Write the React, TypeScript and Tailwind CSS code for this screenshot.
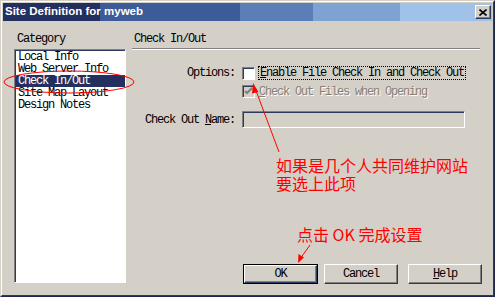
import React from "react";

const mono = "font-['Liberation_Mono',monospace] text-[12px] leading-[12px] tracking-[-1.2px]";

function Btn({ children, isDefault = false }: { children: React.ReactNode; isDefault?: boolean }) {
    const inner = (
        <div className="flex h-full w-full items-center justify-center border border-t-white border-l-white border-r-[#2c3a5e] border-b-[#2c3a5e] bg-[#d4d0c8] shadow-[inset_-1px_-1px_0_#808080] text-black">
            {children}
        </div>
    );
    if (isDefault) {
        return <div className="h-[20px] w-[75px] border border-black">{inner}</div>;
    }
    return <div className="h-[20px] w-[74px]">{inner}</div>;
}

function Checkbox({ checked = false, disabled = false }: { checked?: boolean; disabled?: boolean }) {
    return (
        <div
            className={`flex h-[13px] w-[13px] shrink-0 items-center justify-center border border-t-[#808080] border-l-[#808080] border-r-white border-b-white shadow-[inset_1px_1px_0_#2c3a5e] ${disabled ? "bg-[#d4d0c8]" : "bg-white"}`}
        >
            {checked && (
                <svg width="9" height="9" viewBox="0 0 9 9">
                    <path d="M1 4 L3 6 L8 1" stroke={disabled ? "#808080" : "#000"} strokeWidth="2" fill="none" />
                </svg>
            )}
        </div>
    );
}

export default function App() {
    const categories = ["Local Info", "Web Server Info", "Check In/Out", "Site Map Layout", "Design Notes"];

    return (
        <div className="relative h-[297px] w-[495px] overflow-hidden border border-t-[#d4d0c8] border-l-[#d4d0c8] border-r-[#1e2848] border-b-[#1e2848] bg-[#d4d0c8]">
            <div className="flex h-full w-full flex-col border border-t-white border-l-white border-r-[#2c3a5e] border-b-[#2c3a5e] p-[1px]">
                {/* title bar */}
                <div className="flex h-[18px] shrink-0 items-center bg-[linear-gradient(to_right,#232f5e_0px,#232f5e_97px,#3d5b98_97px,#3d5b98_237px,#5b7eb6_237px,#5b7eb6_310px,#7ea2d1_310px,#7ea2d1_397px,#a0c1e8_397px)]">
                    <span className="pl-[2px] font-['Liberation_Sans',sans-serif] text-[11.5px] font-bold text-white">
                        Site Definition for myweb
                    </span>
                    <div className="ml-auto mr-[1px] flex h-[14px] w-[16px] items-center justify-center border border-t-white border-l-white border-r-[#2c3a5e] border-b-[#2c3a5e] bg-[#d4d0c8] shadow-[inset_-1px_-1px_0_#808080]">
                        <svg width="8" height="7" viewBox="0 0 8 7">
                            <path d="M0.5 0.5 L7.5 6.5 M7.5 0.5 L0.5 6.5" stroke="#000" strokeWidth="1.6" />
                        </svg>
                    </div>
                </div>

                {/* body */}
                <div className={`flex min-h-0 flex-1 ${mono} text-black`}>
                    {/* category column */}
                    <div className="ml-[11px] flex w-[112px] flex-col">
                        <div className="mt-[12px] h-[13px] pl-[3px]">Category</div>
                        <div className="mt-[3px] h-[234px] border border-t-[#808080] border-l-[#808080] border-r-white border-b-white bg-white shadow-[inset_1px_1px_0_#2c3a5e]">
                            <div className="pt-[1px] pl-[1px]">
                                {categories.map((c) => (
                                    <div
                                        key={c}
                                        className={`flex h-[12px] items-center pl-[2px] ${c === "Check In/Out" ? "bg-[#232f5e] text-white" : ""}`}
                                    >
                                        <span className="leading-[11px]">{c}</span>
                                    </div>
                                ))}
                            </div>
                        </div>
                    </div>

                    {/* settings column */}
                    <div className="ml-[6px] flex w-[348px] flex-col">
                        <div className="mt-[12px] h-[13px] pl-[2px]">Check In/Out</div>
                        <div className="mt-[2px] h-[2px] border-t border-b border-t-[#808080] border-b-white" />

                        <div className="mt-[16px] flex h-[14px] items-center">
                            <div className="w-[104px] pr-[1px] text-right">Options:</div>
                            <div className="ml-[6px]">
                                <Checkbox />
                            </div>
                            <div className="ml-[3px] flex h-[14px] items-center border border-dotted border-black px-[1px]">
                                <span>
                                    <span className="underline">E</span>nable File Check In and Check Out
                                </span>
                            </div>
                        </div>

                        <div className="mt-[5px] flex h-[13px] items-center">
                            <div className="ml-[110px]">
                                <Checkbox checked disabled />
                            </div>
                            <div className="ml-[4px] text-[#808080] [text-shadow:1px_1px_0_#fff]">
                                <span className="underline">C</span>heck Out Files when Opening
                            </div>
                        </div>

                        <div className="mt-[13px] flex h-[17px] items-center">
                            <div className="w-[104px] pr-[1px] text-right">
                                Check Out <span className="underline">N</span>ame:
                            </div>
                            <div className="ml-[6px] h-[17px] w-[223px] border border-t-[#808080] border-l-[#808080] border-r-white border-b-white bg-[#d4d0c8] shadow-[inset_1px_1px_0_#2c3a5e]" />
                        </div>

                        <div className="mt-auto mb-[10px] flex items-center">
                            <div className="ml-[111px]">
                                <Btn isDefault>OK</Btn>
                            </div>
                            <div className="ml-[6px]">
                                <Btn>Cancel</Btn>
                            </div>
                            <div className="ml-[10px]">
                                <Btn>
                                    <span>
                                        <span className="underline">H</span>elp
                                    </span>
                                </Btn>
                            </div>
                        </div>
                    </div>
                </div>
            </div>

            {/* red annotations */}
            <svg className="pointer-events-none absolute left-[-1px] top-[-1px]" width="495" height="297" viewBox="0 0 495 297">
                <ellipse cx="69" cy="82" rx="65" ry="11" fill="none" stroke="#ff0000" strokeWidth="1" />
                <line x1="279" y1="152" x2="255" y2="88" stroke="#ff0000" strokeWidth="1" />
                <path d="M253 83 L258.5 92 L252 93.5 Z" fill="#ff0000" />
                <line x1="310" y1="245" x2="300" y2="259" stroke="#ff0000" strokeWidth="1" />
                <path d="M298 263 L298.5 254 L304 257.5 Z" fill="#ff0000" />
            </svg>
            <div className="pointer-events-none absolute left-[275px] top-[155px] font-['Noto_Sans_CJK_SC',sans-serif] text-[16px] leading-[18px] text-[#ff0000]">
                <div>如果是几个人共同维护网站</div>
                <div>要选上此项</div>
            </div>
            <div className="pointer-events-none absolute left-[296px] top-[224px] font-['Noto_Sans_CJK_SC',sans-serif] text-[16px] leading-[18px] text-[#ff0000]">
                点击 OK 完成设置
            </div>
        </div>
    );
}
